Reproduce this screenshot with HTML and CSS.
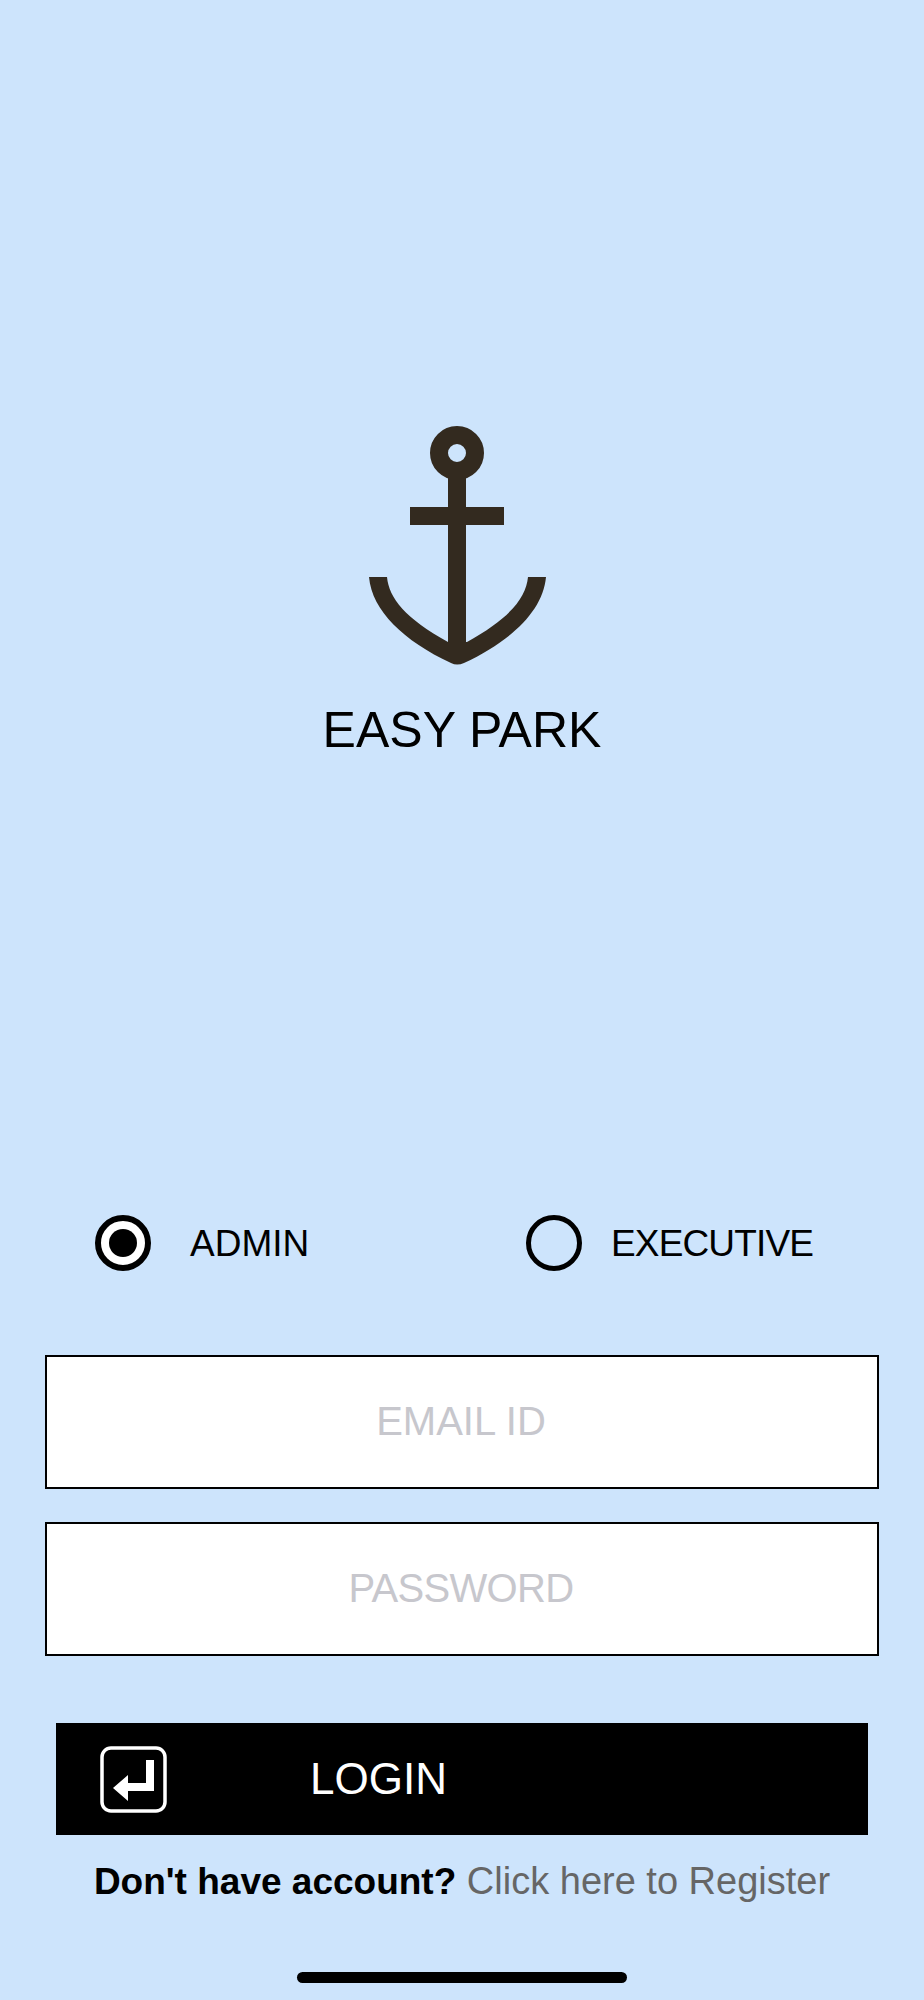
FILE: index.html
```html
<!DOCTYPE html>
<html lang="en">
<head>
    <meta charset="UTF-8">
    <meta name="viewport" content="width=device-width, initial-scale=1.0">
    <title>Easy Park Login</title>
    <link rel="stylesheet" href="styles.css">
</head>
<body>
    <main class="screen">
        <header class="brand">
            <svg class="anchor" width="177" height="239" viewBox="0 0 177 239" aria-hidden="true">
                <circle cx="88" cy="27" r="18" fill="none" stroke="#332a1f" stroke-width="18"/>
                <rect x="79" y="44" width="18" height="180" fill="#332a1f"/>
                <rect x="41" y="81" width="94" height="18" fill="#332a1f"/>
                <path d="M0 151H18C20 172 36 192 79 216H98C141 192 157 172 159 151H177C174 185 142 215 95 237Q88 240 82 237C35 215 3 185 0 151Z" fill="#332a1f"/>
            </svg>
            <h1 class="brand-name">EASY PARK</h1>
        </header>

        <div class="role-group">
            <label class="role role-admin">
                <span class="radio radio-on"></span>
                <span>ADMIN</span>
            </label>
            <label class="role role-executive">
                <span class="radio"></span>
                <span>EXECUTIVE</span>
            </label>
        </div>

        <form class="login-form">
            <input class="field" type="text" placeholder="EMAIL ID" aria-label="Email ID">
            <input class="field field-password" type="password" placeholder="PASSWORD" aria-label="Password">
            <button class="login-button" type="button">
                <svg class="login-icon" width="67" height="67" viewBox="0 0 67 67" aria-hidden="true">
                    <rect x="2" y="2" width="63" height="63" rx="9" fill="none" stroke="#fff" stroke-width="3.5"/>
                    <path d="M13 42L28 29V37H46V14H54V45H28V55Z" fill="#fff"/>
                </svg>
                <span>LOGIN</span>
            </button>
        </form>

        <p class="register"><strong class="register-question">Don't have account?</strong> <a class="register-link" href="#">Click here to Register</a></p>

        <div class="home-indicator"></div>
    </main>
</body>
</html>
```

FILE: styles.css
```css
* { box-sizing: border-box; }
body { margin: 0; background-color: #cde4fc; color: #000; font-family: "Liberation Sans", Arial, sans-serif; }
.screen { display: flex; flex-direction: column; align-items: center; height: 2000px; padding-top: 426px; overflow: hidden; }

.brand { display: flex; flex-direction: column; align-items: center; }
.anchor { display: block; margin-right: 9px; }
.brand-name { margin: 37px 0 0; font-size: 50px; font-weight: normal; line-height: 56px; }

.role-group { display: grid; grid-template-columns: 431px 1fr; width: 100%; margin-top: 457px; padding-left: 95px; }
.role { display: flex; align-items: center; font-size: 37px; line-height: 59px; height: 56px; }
.role-admin { gap: 39px; }
.role-executive { gap: 29px; letter-spacing: -0.85px; }
.radio { display: flex; align-items: center; justify-content: center; flex-shrink: 0; width: 56px; height: 56px; border: 5px solid #000; border-radius: 50%; }
.radio-on { border-width: 6px; background-color: #fff; }
.radio-on::after { content: ""; width: 28px; height: 28px; border-radius: 50%; background-color: #000; }

.login-form { display: flex; flex-direction: column; align-items: center; margin-top: 84px; }
.field { display: block; width: 834px; height: 134px; margin-bottom: 33px; padding: 0 2px 1px 0; border: 2px solid #000; border-radius: 0; background-color: #fff; font-family: inherit; font-size: 40px; text-align: center; }
.field::placeholder { color: #c7c7cd; opacity: 1; }
.field-password { letter-spacing: -0.7px; }
.login-button { display: flex; align-items: center; width: 812px; height: 112px; margin-top: 34px; padding: 0 0 0 44px; border: none; background-color: #000; color: #fff; font-family: inherit; font-size: 44px; }
.login-icon { margin-right: 143px; }

.register { margin: 25px 0 0; font-size: 38px; line-height: 42px; color: #000; white-space: nowrap; }
.register-question { font-size: 37px; }
.register-link { color: #666; text-decoration: none; }

.home-indicator { width: 330px; height: 11px; margin-top: 69px; border-radius: 6px; background-color: #000; }
```
